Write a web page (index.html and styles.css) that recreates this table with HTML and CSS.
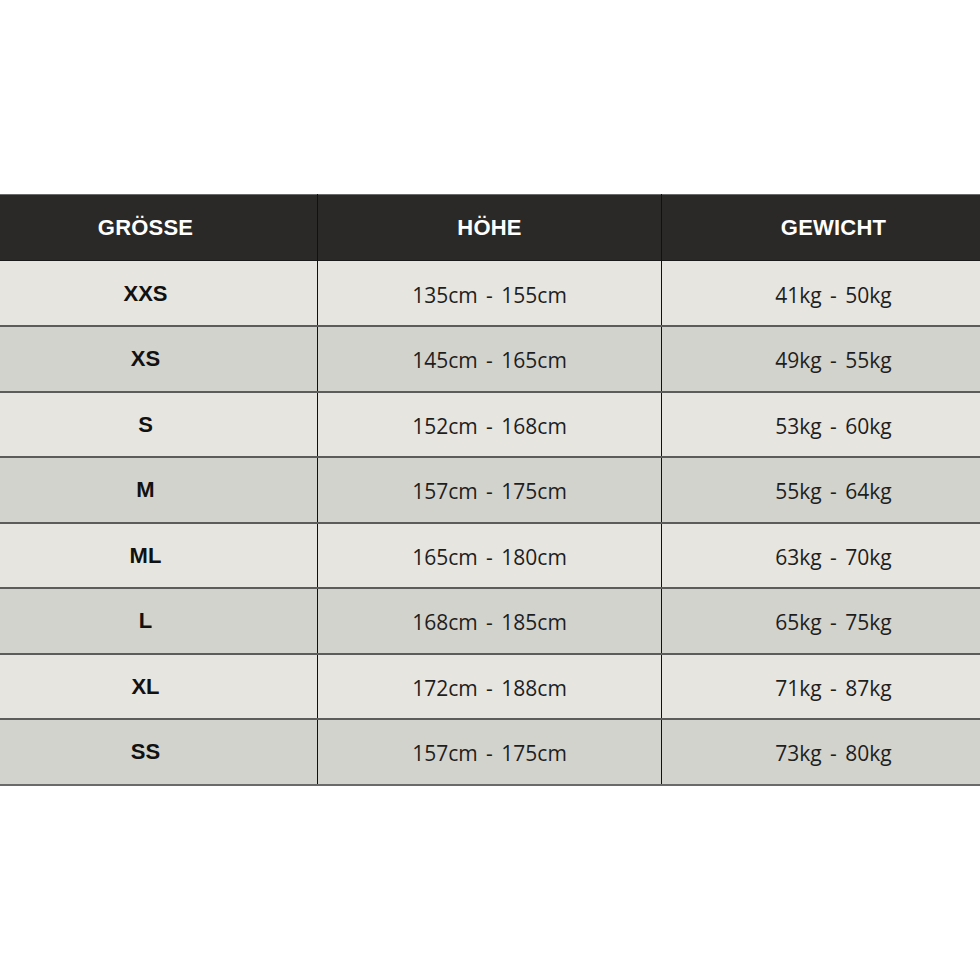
FILE: index.html
```html
<!DOCTYPE html>
<html lang="de">
<head>
<meta charset="utf-8">
<title>Größentabelle</title>
<link rel="stylesheet" href="styles.css">
</head>
<body>
<main class="page">
  <div class="frame">
    <table class="sizes">
      <thead>
        <tr><th>GRÖSSE</th><th>HÖHE</th><th>GEWICHT</th></tr>
      </thead>
      <tbody>
        <tr class="light"><td class="size">XXS</td><td>135cm - 155cm</td><td>41kg - 50kg</td></tr>
        <tr class="dark"><td class="size">XS</td><td>145cm - 165cm</td><td>49kg - 55kg</td></tr>
        <tr class="light"><td class="size">S</td><td>152cm - 168cm</td><td>53kg - 60kg</td></tr>
        <tr class="dark"><td class="size">M</td><td>157cm - 175cm</td><td>55kg - 64kg</td></tr>
        <tr class="light"><td class="size">ML</td><td>165cm - 180cm</td><td>63kg - 70kg</td></tr>
        <tr class="dark"><td class="size">L</td><td>168cm - 185cm</td><td>65kg - 75kg</td></tr>
        <tr class="light"><td class="size">XL</td><td>172cm - 188cm</td><td>71kg - 87kg</td></tr>
        <tr class="dark"><td class="size">SS</td><td>157cm - 175cm</td><td>73kg - 80kg</td></tr>
      </tbody>
    </table>
  </div>
</main>
</body>
</html>
```

FILE: styles.css
```css
html, body {
  margin: 0;
  padding: 0;
  background: #ffffff;
}
.page {
  padding-top: 194px;
}
.frame {
  width: 980px;
  overflow: hidden;
}
.sizes {
  width: 1029px;
  margin-left: -26px;
  border-collapse: collapse;
  table-layout: fixed;
  border-top: 1px solid #6a6a6a;
  border-bottom: 2px solid #6a6a6a;
}
.sizes th, .sizes td {
  width: 343px;
  text-align: center;
  vertical-align: middle;
  padding: 0;
  border-left: 1px solid #111;
}
.sizes th:first-child, .sizes td:first-child { border-left: none; }
.sizes thead tr {
  height: 66px;
  background: #2a2927;
}
.sizes th {
  color: #ffffff;
  font-family: "Liberation Sans", Arial, sans-serif;
  font-weight: 700;
  font-size: 22px;
  letter-spacing: 0.2px;
  padding-top: 1px;
}
.sizes tbody tr {
  height: 65.5px;
  border-top: 2px solid #5c5c5c;
}
.sizes tbody tr:first-child { border-top: 1px solid #1a1a1a; }
.sizes tr.light { background: #e6e5e0; }
.sizes tr.dark { background: #d3d3ce; }
.sizes td {
  color: #1e1e1e;
  font-family: "Open Sans", "Noto Sans", sans-serif;
  font-size: 21px;
  word-spacing: 3px;
  padding-top: 3px;
}
.sizes td.size {
  color: #111;
  font-family: "Liberation Sans", Arial, sans-serif;
  font-weight: 700;
  font-size: 22px;
  word-spacing: 0;
  padding-top: 1px;
}
```
